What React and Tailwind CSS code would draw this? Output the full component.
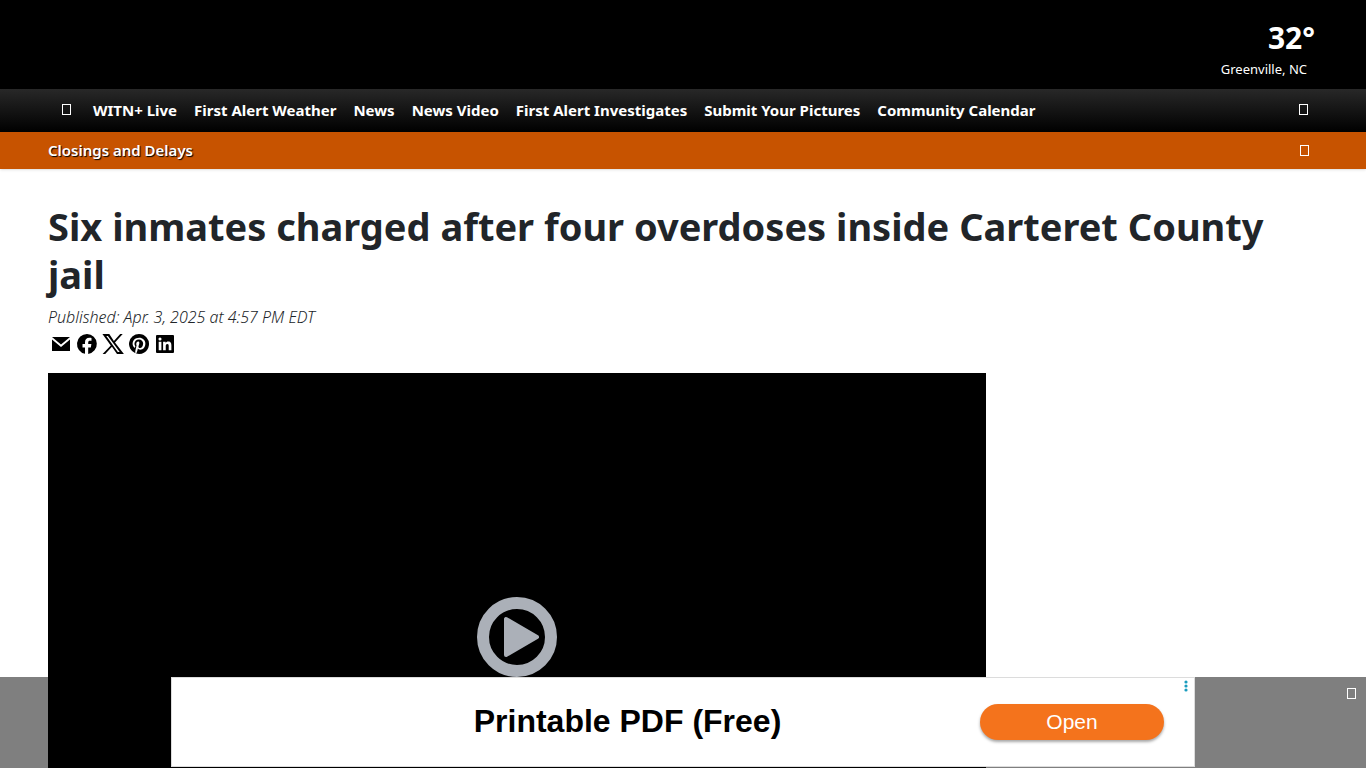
const navLinks = [
  "WITN+ Live",
  "First Alert Weather",
  "News",
  "News Video",
  "First Alert Investigates",
  "Submit Your Pictures",
  "Community Calendar",
];

const shareLinks = [
  {
    label: "Email",
    path: "M3 5h18L12 12.500zM3 7.500l9 7.500 9-7.500V19H3z",
  },
  {
    label: "Facebook",
    path: "M12 2a10 10 0 0 0-2 19.800v-6.300H7.500V12H10v-1.500c0-3.200 1.500-4.700 4.500-4.700.7 0 1.500.1 2 .2v2.800h-1.400c-1.400 0-1.900.6-1.900 1.900V12h3.200l-.6 3.500h-2.600v6.400A10 10 0 0 0 12 2z",
  },
  {
    label: "X",
    path: "M13.980 10.460 21.700 2h-2.500l-6.300 6.950L8.300 2H1.400l8.350 11.400L1.600 22h2.600l6.730-7.150L16 22h6.900zM5.300 4h1.600l11.800 16h-1.900z",
  },
  {
    label: "Pinterest",
    path: "M12 2a10 10 0 0 0-3.640 19.310c-.09-.79-.17-2 .03-2.860l1.170-4.970s-.3-.6-.3-1.480c0-1.390.81-2.430 1.810-2.430.86 0 1.270.64 1.270 1.410 0 .86-.55 2.140-.83 3.330-.24 1 .5 1.810 1.480 1.810 1.770 0 3.140-1.870 3.140-4.570 0-2.390-1.720-4.060-4.170-4.060-2.840 0-4.510 2.130-4.510 4.330 0 .86.33 1.780.74 2.280.08.1.09.19.07.29l-.28 1.130c-.04.18-.15.22-.34.13-1.250-.58-2.030-2.400-2.030-3.870 0-3.150 2.290-6.040 6.600-6.040 3.460 0 6.160 2.470 6.160 5.770 0 3.440-2.170 6.210-5.180 6.210-1.010 0-1.960-.53-2.290-1.150l-.62 2.370c-.22.87-.83 1.950-1.240 2.610A10 10 0 1 0 12 2z",
  },
  {
    label: "LinkedIn",
    path: "M4 3a1 1 0 0 0-1 1v16a1 1 0 0 0 1 1h16a1 1 0 0 0 1-1V4a1 1 0 0 0-1-1zm1.700 6.700h2.700v8.600H5.700zM7 5.500a1.550 1.550 0 1 1 0 3.100 1.550 1.550 0 0 1 0-3.100zm3.100 4.200h2.560v1.200c.36-.68 1.230-1.400 2.530-1.400 2.700 0 3.200 1.800 3.200 4.100v4.700h-2.670v-4.150c0-1 0-2.260-1.380-2.260s-1.590 1.080-1.590 2.190v4.220H10.100z",
  },
];

function BoxButton({ label, className }) {
  return (
    <button type="button" aria-label={label} className={className}>
      <span className="block h-[11px] w-[9px] border border-white" />
    </button>
  );
}

function Header() {
  return (
    <header>
      <div className="flex h-[89px] items-end justify-end bg-black px-12 pb-[9px] text-white">
        <a href="#weather" className="flex flex-col items-end pr-[11px]">
          <span className="-mr-2 text-[30px] font-bold leading-[40px]">32°</span>
          <span className="text-[13px] leading-[22px]">Greenville, NC</span>
        </a>
      </div>
      <nav className="flex h-[43px] items-center justify-between bg-linear-to-b/srgb from-[#282828] to-black px-12 pb-[2px] text-white">
        <div className="flex items-center">
          <BoxButton label="Menu" className="mr-[22px] ml-[14px]" />
          <ul className="flex gap-[17px] text-[15px] font-bold leading-6">
            {navLinks.map((link) => (
              <li key={link}>
                <a href="#nav" className="whitespace-nowrap">{link}</a>
              </li>
            ))}
          </ul>
        </div>
        <BoxButton label="Search" className="mr-[10px]" />
      </nav>
      <div className="flex h-[37px] items-center justify-between bg-[#c75300] px-12 pb-px text-white shadow-sm">
        <a href="#closings" className="text-[15px] font-semibold leading-6 [text-shadow:1px_1px_1px_#000]">
          Closings and Delays
        </a>
        <BoxButton label="Close alert" className="mr-[9px]" />
      </div>
    </header>
  );
}

function ShareBar() {
  return (
    <ul className="mt-[2px] flex h-[26px] items-center">
      {shareLinks.map((item) => (
        <li key={item.label}>
          <a href="#share" aria-label={item.label} className="flex size-[26px] items-center justify-center">
            <svg viewBox="0 0 24 24" className="size-6" fill="#000" fillRule="evenodd">
              <path d={item.path} />
            </svg>
          </a>
        </li>
      ))}
    </ul>
  );
}

function VideoPlayer() {
  return (
    <div className="flex aspect-video min-w-0 flex-1 items-center justify-center bg-black">
      <button type="button" aria-label="Play video">
        <svg viewBox="0 0 80 80" className="size-20">
          <circle cx="40" cy="40" r="34" fill="none" stroke="#abb0b8" strokeWidth="12" />
          <path
            d="M29 22v36l31-18z"
            fill="#abb0b8"
            stroke="#abb0b8"
            strokeWidth="4"
            strokeLinejoin="round"
          />
        </svg>
      </button>
    </div>
  );
}

function AdBanner() {
  return (
    <aside className="fixed inset-x-0 bottom-0 flex h-[91px] items-start justify-center bg-black/50">
      <div className="relative grid h-[90px] w-full max-w-[1024px] grid-cols-[1fr_214px] items-center border border-[#dcdcdc] bg-white font-['Liberation_Sans',Arial,sans-serif]">
        <a href="#ad" className="pb-[2px] pl-[103px] text-center text-[32px] font-bold leading-10 text-black">
          Printable PDF (Free)
        </a>
        <button
          type="button"
          className="h-9 w-[184px] rounded-full bg-[#f4731c] text-[21px] text-white shadow-[0_2px_3px_rgba(0,0,0,0.35)]"
        >
          Open
        </button>
        <button type="button" aria-label="Ad options" className="absolute top-[2px] right-[6px]">
          <svg viewBox="0 0 4 12" className="h-3 w-1" fill="#1a9cbe">
            <circle cx="2" cy="2" r="1.600" />
            <circle cx="2" cy="6" r="1.600" />
            <circle cx="2" cy="10" r="1.600" />
          </svg>
        </button>
      </div>
      <BoxButton label="Close ad" className="absolute top-[11px] right-[10px]" />
    </aside>
  );
}

export default function App() {
  return (
    <div className="min-h-screen bg-white font-['Noto_Sans','Open_Sans',sans-serif] text-[#212529]">
      <Header />
      <main className="px-12 pt-[33px]">
        <h1 className="text-[38px] font-bold leading-[48px]">
          Six inmates charged after four overdoses inside Carteret County jail
        </h1>
        <p className="mt-[7px] text-base font-light italic leading-6">
          Published: Apr. 3, 2025 at 4:57 PM EDT
        </p>
        <ShareBar />
        <div className="mt-4 flex gap-8">
          <VideoPlayer />
          <div className="w-[300px] shrink-0" />
        </div>
      </main>
      <AdBanner />
    </div>
  );
}
